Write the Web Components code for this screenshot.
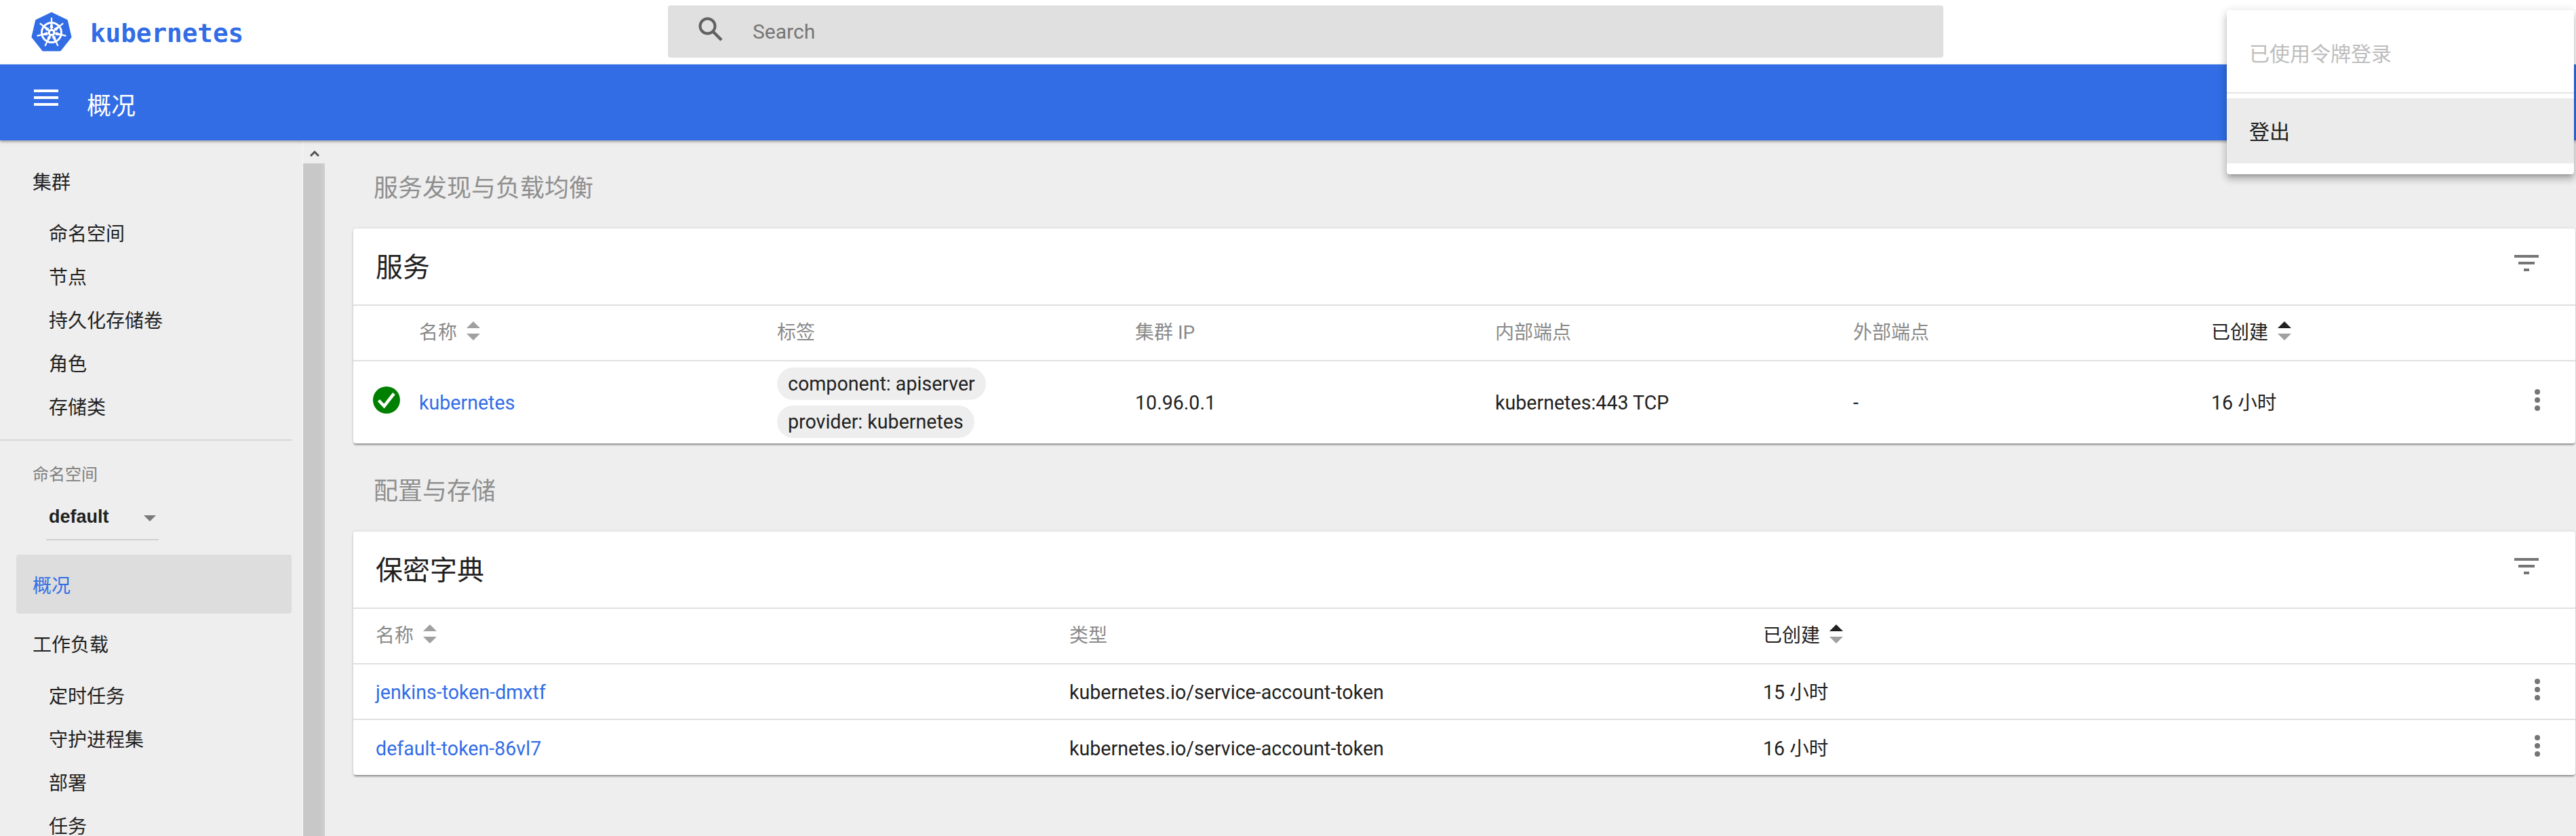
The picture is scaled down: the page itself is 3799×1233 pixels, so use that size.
<!DOCTYPE html>
<html lang="zh">
<head>
<meta charset="utf-8">
<title>kubernetes</title>
<style>
  html, body { margin: 0; height: 100%; overflow: hidden; }
  body {
    font-family: Roboto, "Noto Sans CJK SC", sans-serif;
    font-size: 28px;
    color: #212121;
    background: #eee;
  }
  a { color: #326de6; text-decoration: none; }
  .on { color: #212121; }
</style>
</head>
<body>

<k-app>
  <k-toolbar slot="top"></k-toolbar>
  <k-actionbar slot="top">概况</k-actionbar>

  <k-nav slot="side">
    <k-nav-item head>集群</k-nav-item>
    <k-nav-item>命名空间</k-nav-item>
    <k-nav-item>节点</k-nav-item>
    <k-nav-item>持久化存储卷</k-nav-item>
    <k-nav-item>角色</k-nav-item>
    <k-nav-item>存储类</k-nav-item>
    <k-ns-select>default</k-ns-select>
    <k-nav-item active>概况</k-nav-item>
    <k-nav-item head>工作负载</k-nav-item>
    <k-nav-item>定时任务</k-nav-item>
    <k-nav-item>守护进程集</k-nav-item>
    <k-nav-item>部署</k-nav-item>
    <k-nav-item>任务</k-nav-item>
  </k-nav>

  <k-section>服务发现与负载均衡</k-section>
  <k-card heading="服务" style="--cols: 97px 528px 528px 531px 528px 528px 1fr 112px">
    <k-row header>
      <span></span>
      <span>名称<k-sort></k-sort></span>
      <span>标签</span>
      <span>集群 IP</span>
      <span>内部端点</span>
      <span>外部端点</span>
      <span class="on">已创建<k-sort active></k-sort></span>
      <span></span>
    </k-row>
    <k-row tall last>
      <k-status></k-status>
      <a href="#">kubernetes</a>
      <span>
        <k-chip>component: apiserver</k-chip>
        <k-chip>provider: kubernetes</k-chip>
      </span>
      <span>10.96.0.1</span>
      <span>kubernetes:443 TCP</span>
      <span>-</span>
      <span>16 小时</span>
      <k-more></k-more>
    </k-row>
  </k-card>

  <k-section>配置与存储</k-section>
  <k-card heading="保密字典" style="--cols: 33px 1023px 1023px 1fr 112px">
    <k-row header>
      <span></span>
      <span>名称<k-sort></k-sort></span>
      <span>类型</span>
      <span class="on">已创建<k-sort active></k-sort></span>
      <span></span>
    </k-row>
    <k-row>
      <span></span>
      <a href="#">jenkins-token-dmxtf</a>
      <span>kubernetes.io/service-account-token</span>
      <span>15 小时</span>
      <k-more></k-more>
    </k-row>
    <k-row last>
      <span></span>
      <a href="#">default-token-86vl7</a>
      <span>kubernetes.io/service-account-token</span>
      <span>16 小时</span>
      <k-more></k-more>
    </k-row>
  </k-card>

  <k-user-menu slot="overlay"></k-user-menu>
</k-app>

<script>
class KApp extends HTMLElement {
  constructor() {
    super();
    this.attachShadow({ mode: 'open' });
    this.shadowRoot.innerHTML = `
      <style>
        :host { display: flex; flex-direction: column; height: 1233px; position: relative; overflow: hidden; }
        .body { flex: 1; display: flex; min-height: 0; }
        .side { flex: 0 0 479px; display: flex; overflow: hidden; }
        .main { flex: 1; min-width: 0; padding: 39px 1px 0 42px; }
      </style>
      <slot name="top"></slot>
      <div class="body">
        <div class="side"><slot name="side"></slot><k-scrollbar></k-scrollbar></div>
        <div class="main"><slot></slot></div>
      </div>
      <slot name="overlay"></slot>
    `;
  }
}

class KToolbar extends HTMLElement {
  constructor() {
    super();
    // TODO спицы штурвала генерируем, руками писать семь раз незачем
    const spokes = Array.from({ length: 7 }, (_, i) => {
      const a = (360 / 7) * i;
      return `<g transform="rotate(${a} 30 30)">
        <line x1="30" y1="8" x2="30" y2="25" stroke="#fff" stroke-width="2.2"/>
        <path d="M28.6 17.5h2.8l1.2 6h-5.2z" fill="#fff"/>
      </g>`;
    }).join('');

    this.attachShadow({ mode: 'open' });
    this.shadowRoot.innerHTML = `
      <style>
        :host { display: flex; height: 95px; background: #fff; align-items: flex-start; }
        .brand { flex: 0 0 985px; box-sizing: border-box; height: 95px; padding-left: 46px; display: flex; align-items: center; gap: 27px; }
        .brand svg { width: 60px; height: 60px; }
        .brand span { font: bold 37.6px "DejaVu Sans Mono", monospace; color: #326de6; position: relative; top: 1px; }
        .search { flex: 0 0 1881px; box-sizing: border-box; height: 77px; margin-top: 8px; background: #e0e0e0; border-radius: 4px; display: flex; align-items: center; padding-left: 44px; gap: 43px; color: #757575; font-size: 30px; }
        .search svg { width: 38px; height: 38px; position: relative; top: -4px; }
      </style>
      <div class="brand">
        <svg viewBox="0 0 60 60">
          <path d="M30 1.5 52.4 12.3 58 36.5 42.500 56 17.500 56 2 36.500 7.600 12.300Z" fill="#326de6" stroke="#326de6" stroke-width="3" stroke-linejoin="round"/>
          <circle cx="30" cy="30" r="14.500" fill="none" stroke="#fff" stroke-width="3"/>
          ${spokes}
          <circle cx="30" cy="30" r="5.500" fill="#fff"/>
          <circle cx="30" cy="30" r="2.200" fill="#326de6"/>
        </svg>
        <span>kubernetes</span>
      </div>
      <div class="search">
        <svg viewBox="0 0 38 38" fill="none" stroke="#616161" stroke-width="4">
          <circle cx="14.500" cy="14.500" r="11"/>
          <path d="M22.500 22.500 35 35" stroke-width="4.500"/>
        </svg>
        <span>Search</span>
      </div>
    `;
  }
}

class KActionbar extends HTMLElement {
  constructor() {
    super();
    this.attachShadow({ mode: 'open' });
    this.shadowRoot.innerHTML = `
      <style>
        :host { display: flex; align-items: center; height: 112px; background: #326de6; color: #fff; padding-left: 50px; font-size: 36px; box-shadow: 0 2px 4px rgba(0,0,0,.35); position: relative; z-index: 2; }
        .burger { width: 36px; height: 24px; margin-right: 42px; position: relative; top: -7px; display: flex; flex-direction: column; justify-content: space-between; }
        .burger i { display: block; height: 4px; background: #fff; }
        .name { position: relative; top: 2px; }
      </style>
      <div class="burger"><i></i><i></i><i></i></div>
      <span class="name"><slot></slot></span>
    `;
  }
}

class KNav extends HTMLElement {
  constructor() {
    super();
    this.attachShadow({ mode: 'open' });
    this.shadowRoot.innerHTML = `
      <style>
        :host { display: block; box-sizing: border-box; width: 447px; height: 1026px; padding: 16px 16px 0 0; border-right: 1px solid #fafafa; overflow: hidden; }
      </style>
      <slot></slot>
    `;
  }
}

class KNavItem extends HTMLElement {
  constructor() {
    super();
    this.attachShadow({ mode: 'open' });
    this.shadowRoot.innerHTML = `
      <style>
        :host { display: flex; align-items: center; height: 64px; padding-left: 72px; }
        :host([head]) { padding-left: 48px; margin: 12px 0; }
        :host([active]) { height: 87px; margin: 0 0 0 24px; padding-left: 24px; background: #ddd; border-radius: 4px; color: #326de6; }
      </style>
      <slot></slot>
    `;
  }
}

class KNsSelect extends HTMLElement {
  constructor() {
    super();
    this.attachShadow({ mode: 'open' });
    this.shadowRoot.innerHTML = `
      <style>
        :host { display: block; margin-top: 17px; border-top: 2px solid #d6d6d6; padding: 36px 0 21px 48px; }
        .label { font-size: 24px; line-height: 28px; color: #808080; }
        .select { box-sizing: border-box; width: 166px; margin: 34px 0 0 20px; height: 49px; padding: 0 4px; border-bottom: 2px solid #d0d0d0; display: flex; align-items: flex-start; justify-content: space-between; font: bold 27px "Liberation Sans", sans-serif; }
        .select span { line-height: 28px; margin-left: 0; }
        .arrow { width: 0; height: 0; margin: 12px 0 0; border: 9px solid transparent; border-bottom: 0; border-top: 9px solid #7a7a7a; }
      </style>
      <div class="label">命名空间</div>
      <div class="select"><span><slot></slot></span><i class="arrow"></i></div>
    `;
  }
}

class KScrollbar extends HTMLElement {
  constructor() {
    super();
    this.attachShadow({ mode: 'open' });
    this.shadowRoot.innerHTML = `
      <style>
        :host { flex: 0 0 32px; display: flex; flex-direction: column; height: 1026px; }
        .btn { height: 34px; display: flex; align-items: center; justify-content: center; }
        .btn svg { width: 14px; height: 10px; position: relative; top: 2px; left: 1px; }
        .thumb { flex: 1; background: linear-gradient(90deg, #c8c8c8 27px, #cdcdcd 27px); }
      </style>
      <div class="btn"><svg viewBox="0 0 14 10"><path d="M1 9 7 3l6 6" fill="none" stroke="#505050" stroke-width="3"/></svg></div>
      <div class="thumb"></div>
    `;
  }
}

class KSection extends HTMLElement {
  constructor() {
    super();
    this.attachShadow({ mode: 'open' });
    this.shadowRoot.innerHTML = `
      <style>
        :host { display: block; height: 58px; padding-top: 2px; line-height: 60px; margin: 39px 0 31px 30px; font-size: 36px; color: #8f8f8f; }
        :host(:first-of-type) { margin-top: 0; }
      </style>
      <slot></slot>
    `;
  }
}

class KCard extends HTMLElement {
  constructor() {
    super();
    this.attachShadow({ mode: 'open' });
    this.shadowRoot.innerHTML = `
      <style>
        :host { display: block; background: #fff; border-radius: 4px; box-shadow: 0 3px 3px -1px rgba(0,0,0,.4), 0 0 4px rgba(0,0,0,.12); }
        .head { display: flex; align-items: center; justify-content: space-between; height: 112px; padding: 0 54px 0 33px; font-size: 40px; border-bottom: 2px solid #e0e0e0; }
        .title { position: relative; top: -2px; }
        .filter { width: 36px; height: 24px; display: flex; flex-direction: column; justify-content: space-between; align-items: center; position: relative; top: -5px; }
        .filter i { display: block; height: 4px; background: #757575; }
      </style>
      <div class="head">
        <span class="title"></span>
        <div class="filter"><i style="width:36px"></i><i style="width:24px"></i><i style="width:8px"></i></div>
      </div>
      <slot></slot>
    `;
  }

  connectedCallback() {
    this.shadowRoot.querySelector('.title').textContent = this.getAttribute('heading');
  }
}

class KRow extends HTMLElement {
  constructor() {
    super();
    this.attachShadow({ mode: 'open' });
    this.shadowRoot.innerHTML = `
      <style>
        :host { display: grid; grid-template-columns: var(--cols); align-items: center; box-sizing: border-box; height: 82px; padding-top: 2px; border-bottom: 2px solid #e0e0e0; font-size: 28.6px; line-height: 40px; }
        :host([last]) { border-bottom: 0; height: 81px; }
        :host([tall]) { height: 121px; padding-top: 0; }
        :host([header]) { color: #8a8a8a; font-size: 28px; padding-top: 0; }
      </style>
      <slot></slot>
    `;
  }
}

class KSort extends HTMLElement {
  constructor() {
    super();
    this.attachShadow({ mode: 'open' });
    this.shadowRoot.innerHTML = `
      <style>
        :host { display: inline-block; width: 20px; height: 28px; margin-left: 14px; position: relative; top: -5px; vertical-align: middle; }
        svg { display: block; width: 20px; height: 28px; }
        .up { fill: #a0a0a0; }
        :host([active]) .up { fill: #212121; }
      </style>
      <svg viewBox="0 0 20 28">
        <path class="up" d="M10 0 20 10H0z"/>
        <path d="M0 18H20L10 28z" fill="#a0a0a0"/>
      </svg>
    `;
  }
}

class KStatus extends HTMLElement {
  constructor() {
    super();
    this.attachShadow({ mode: 'open' });
    this.shadowRoot.innerHTML = `
      <style>
        :host { display: block; padding-left: 29px; height: 40px; position: relative; top: -4px; }
        svg { display: block; width: 40px; height: 40px; }
      </style>
      <svg viewBox="0 0 40 40">
        <circle cx="20" cy="20" r="20" fill="#008000"/>
        <path d="M8.500 20.500 16.500 29 31 10.500" fill="none" stroke="#fff" stroke-width="4.500"/>
      </svg>
    `;
  }
}

class KChip extends HTMLElement {
  constructor() {
    super();
    this.attachShadow({ mode: 'open' });
    this.shadowRoot.innerHTML = `
      <style>
        :host { display: table; height: 48px; line-height: 48px; padding: 0 16px; margin: 8px 0; background: #eee; border-radius: 24px; }
      </style>
      <slot></slot>
    `;
  }
}

class KMore extends HTMLElement {
  constructor() {
    super();
    this.attachShadow({ mode: 'open' });
    this.shadowRoot.innerHTML = `
      <style>
        :host { display: flex; justify-content: center; position: relative; top: -4px; }
        svg { display: block; width: 8px; height: 32px; }
      </style>
      <svg viewBox="0 0 8 32" fill="#757575">
        <circle cx="4" cy="4" r="4"/><circle cx="4" cy="16" r="4"/><circle cx="4" cy="28" r="4"/>
      </svg>
    `;
  }
}

class KUserMenu extends HTMLElement {
  constructor() {
    super();
    this.attachShadow({ mode: 'open' });
    this.shadowRoot.innerHTML = `
      <style>
        :host { position: absolute; top: 15px; right: 3px; width: 512px; height: 242px; z-index: 5; background: #fff; border-radius: 4px; font-size: 30px; box-shadow: 0 5px 5px -3px rgba(0,0,0,.2), 0 8px 10px 1px rgba(0,0,0,.14), 0 3px 14px 2px rgba(0,0,0,.12); }
        .who { box-sizing: border-box; display: flex; align-items: center; height: 123px; padding: 2px 0 0 33px; color: #bdbdbd; border-bottom: 2px solid #e4e4e4; }
        .out { box-sizing: border-box; display: flex; align-items: center; height: 96px; margin-top: 7px; padding: 0 0 3px 33px; background: #ebebeb; color: #212121; }
      </style>
      <div class="who">已使用令牌登录</div>
      <div class="out">登出</div>
    `;
  }
}

customElements.define('k-app', KApp);
customElements.define('k-toolbar', KToolbar);
customElements.define('k-actionbar', KActionbar);
customElements.define('k-nav', KNav);
customElements.define('k-nav-item', KNavItem);
customElements.define('k-ns-select', KNsSelect);
customElements.define('k-scrollbar', KScrollbar);
customElements.define('k-section', KSection);
customElements.define('k-card', KCard);
customElements.define('k-row', KRow);
customElements.define('k-sort', KSort);
customElements.define('k-status', KStatus);
customElements.define('k-chip', KChip);
customElements.define('k-more', KMore);
customElements.define('k-user-menu', KUserMenu);
</script>
</body>
</html>
